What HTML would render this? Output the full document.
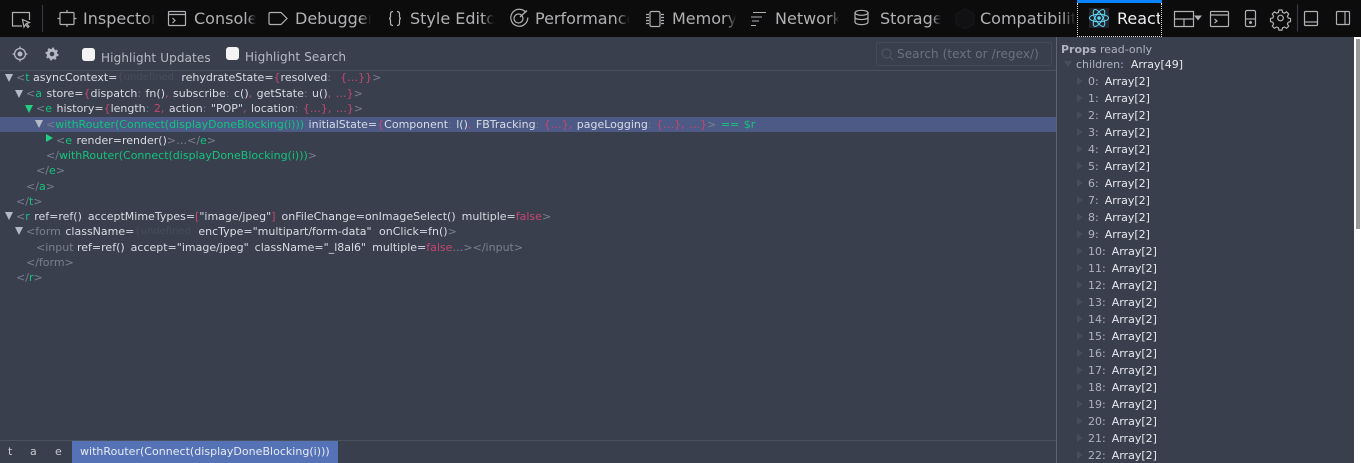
<!DOCTYPE html>
<html><head><meta charset="utf-8"><style>
html,body{margin:0;padding:0;width:1361px;height:463px;overflow:hidden;background:#fff}
body{position:relative;font-family:"DejaVu Sans","Liberation Sans",sans-serif}
.a{position:absolute;white-space:pre}
#tb{position:absolute;left:0;top:0;width:1361px;height:37px;background:#0c0c0d}
.t{position:absolute;top:9px;font-size:16px;line-height:20px;color:#b1b1b3;white-space:pre;overflow:hidden;-webkit-mask-image:linear-gradient(to right,#000 86%,transparent 100%);mask-image:linear-gradient(to right,#000 86%,transparent 100%)}
svg{position:absolute;overflow:visible}
#panel{position:absolute;left:0;top:37px;width:1354px;height:426px;background:#393f4c}
.r{position:absolute;font-size:11px;line-height:15px;height:15px;white-space:pre;color:#d8dce4;word-spacing:1px}
.g{color:#12c47c}.b{color:#79808d}.p{color:#c4476f}.c{color:#6f7684}.u{display:inline-block;color:#474d5a;width:58px;overflow:hidden;font-size:10px;vertical-align:top}
.s{display:inline-block;width:1.500px}.n{display:inline-block;margin-right:-1px}
.tri{position:absolute;width:0;height:0;border-left:4.5px solid transparent;border-right:4.5px solid transparent;border-top:8px solid #b4bac4}
.trg{border-top-color:#1fd080}
.pr{position:absolute;font-size:11px;line-height:15px;color:#aeb3bf;white-space:pre}
.pr b{font-weight:normal;color:#e6e8ee;margin-left:6px}
.pt{position:absolute;left:1077px;width:0;height:0;border-top:4px solid transparent;border-bottom:4px solid transparent;border-left:6px solid #474d5a}
.cb{position:absolute;width:12.500px;height:13px;border-radius:3px;background:#f4f4f6}
</style></head><body>
<div id="tb"></div>

<svg style="left:0;top:0" width="1361" height="37" fill="none" stroke="#b1b1b3" stroke-width="1.2">
<path d="M22 26H12.500V12.500H29.500V20"/>
<path d="M22.500 19.500l7 3-3 1 2.500 3-1 1-2.500-3-1.500 2.500z"/>
<path d="M42.500 5V32" stroke="#38383d"/>
<rect x="60" y="12.500" width="14" height="12" rx="1"/>
<path d="M57.500 18.500h2.500M74 18.500h2.500M67 10v2.500M67 24.500V27"/>
<rect x="168.500" y="11.500" width="17" height="14" rx="1"/><path d="M168.500 14.500h17M172.500 18l2.500 2.500-2.500 2.500"/>
<path d="M270.500 12.500h10.500l6 6-6 6h-10.500q-1.500 0-1.500-1.500v-9q0-1.500 1.500-1.500z"/>
<path d="M393 11.500q-2.500 0-2.500 2.500v2.500q0 2-1.500 2 1.500 0 1.500 2V23q0 2.500 2.500 2.500M397 11.500q2.500 0 2.500 2.500v2.500q0 2 1.500 2-1.500 0-1.500 2V23q0 2.500-2.500 2.500"/>
<path d="M526 12.500a8.500 8.500 0 1 0 1.800 5"/><circle cx="518.500" cy="18.500" r="4.500"/><path d="M520 17l7-6.500"/>
<rect x="650" y="11.500" width="10" height="15" rx="1.500"/><path d="M646 14.500h3M646 17.500h3M646 20.500h3M646 23.500h3M661 14.500h3M661 17.500h3M661 20.500h3M661 23.500h3"/>
<path d="M753 12.500h13M751 17h11M752 21h7M751 25.500h5" stroke-width="1"/>
<ellipse cx="861.500" cy="12.800" rx="6.500" ry="2.500"/><path d="M855 12.800v4.500c0 3 13 3 13 0v-4.500M855 17.300v4.700c0 3.500 13 3.500 13 0v-4.700"/>
<path d="M956 14l9-5 9 5v10l-9 5-9-5z" stroke="#171719" fill="#111113"/>
<path d="M1174.500 11.500h19v15h-19zM1174.500 19h19M1184 19v7.500"/>
<path d="M1194 15.500h8l-4 5z" fill="#b1b1b3" stroke="none"/>
<rect x="1210.500" y="11.500" width="18" height="15" rx="1"/><path d="M1210.500 15h18M1214.500 19l2.500 2-2.500 2"/>
<rect x="1245.500" y="10.500" width="10" height="16" rx="1.500"/><circle cx="1250.500" cy="22.500" r="1.500" fill="#b1b1b3" stroke="none"/><path d="M1245.500 19h10"/>
<path d="M1279 10.500h3l.6 2.400 1.800.8 2.200-1.300 2.100 2.100-1.300 2.200.8 1.800 2.300.6v3l-2.300.6-.8 1.800 1.300 2.200-2.100 2.100-2.200-1.300-1.800.8-.6 2.300h-3l-.6-2.300-1.800-.8-2.200 1.300-2.100-2.100 1.300-2.200-.8-1.800-2.300-.6v-3l2.300-.6.8-1.800-1.300-2.200 2.100-2.100 2.200 1.300 1.800-.8z" transform="translate(0 -.5)"/><circle cx="1280.500" cy="18" r="2.800"/>
<path d="M1297.500 4.500V31.500" stroke="#38383d"/>
<rect x="1304.500" y="11.500" width="13" height="14" rx="1"/><path d="M1304.500 22h13"/>
<rect x="1336.500" y="11.500" width="13" height="13" rx="1"/><path d="M1345 11.500v13"/>
</svg>

<div class="t" style="left:83px;width:72px">Inspector</div>
<div class="t" style="left:194px;width:62px">Console</div>
<div class="t" style="left:295px;width:76px">Debugger</div>
<div class="t" style="left:410px;width:84px">Style Editor</div>
<div class="t" style="left:535px;width:95px">Performance</div>
<div class="t" style="left:672px;width:64px">Memory</div>
<div class="t" style="left:775px;width:64px">Network</div>
<div class="t" style="left:880px;width:61px">Storage</div>
<div class="t" style="left:980px;width:96px">Compatibility</div>

<div class="a" style="left:1077px;top:0;width:85px;height:3px;background:#0a84ff"></div>
<div class="a" style="left:1077px;top:3px;width:83px;height:33px;border:1px dotted #ddd;border-top:0"></div>
<div class="a" style="left:1089px;top:8px;width:20px;height:20px;background:#20232a"></div>
<svg style="left:1089px;top:8px" width="20" height="20" fill="none" stroke="#61dafb" stroke-width="1">
<ellipse cx="10" cy="10" rx="9.500" ry="3.800"/><ellipse cx="10" cy="10" rx="9.500" ry="3.800" transform="rotate(60 10 10)"/><ellipse cx="10" cy="10" rx="9.500" ry="3.800" transform="rotate(120 10 10)"/><circle cx="10" cy="10" r="1.800" fill="#61dafb" stroke="none"/>
</svg>
<div class="t" style="left:1117px;width:43px;color:#f0f0f2;-webkit-mask-image:none;mask-image:none">React</div>

<div id="panel"></div>
<div class="a" style="left:1356px;top:39px;width:3.500px;height:190px;background:#9a9a9a"></div>

<!-- sub toolbar -->
<svg style="left:0;top:37px" width="70" height="34" fill="none">
<circle cx="20" cy="17" r="5.500" stroke="#b4b9c3" stroke-width="1.300"/><circle cx="20" cy="17" r="2.500" fill="#b4b9c3"/><path d="M20 9.500v2M20 22.500v2M12.500 17h2M25.500 17h2" stroke="#b4b9c3" stroke-width="1.300"/>
<circle cx="52" cy="17" r="3.800" stroke="#b4b9c3" stroke-width="3"/><circle cx="52" cy="17" r="5.800" stroke="#b4b9c3" stroke-width="1.500" stroke-dasharray="2 2.550"/>
</svg>
<div class="cb" style="left:82px;top:48px"></div>
<div class="a" style="left:101px;top:51px;font-size:12px;line-height:15px;letter-spacing:.12px;color:#b6bbc5">Highlight Updates</div>
<div class="cb" style="left:226px;top:47px"></div>
<div class="a" style="left:245px;top:50px;font-size:12px;line-height:15px;letter-spacing:.12px;color:#b6bbc5">Highlight Search</div>
<div class="a" style="left:876px;top:42px;width:174px;height:22px;border:1px solid #444a57;border-radius:2px"></div>
<svg style="left:880px;top:47px" width="14" height="14" fill="none"><circle cx="6.500" cy="6.500" r="4.500" stroke="#4d5360" stroke-width="1.300"/><path d="M10 10l3 3" stroke="#4d5360" stroke-width="1.300"/></svg>
<div class="a" style="left:897px;top:47px;font-size:12px;line-height:15px;letter-spacing:.08px;color:#6b7280">Search (text or /regex/)</div>
<div class="a" style="left:0;top:70px;width:1056px;height:1px;background:#4a505c"></div>

<!-- divider -->
<div class="a" style="left:1056px;top:37px;width:1px;height:426px;background:#5d636f"></div>

<!-- tree -->
<div class="a" style="left:0;top:117px;width:1056px;height:15px;background:#4c5a85"></div>

<div class="tri" style="left:5px;top:74px"></div>
<div class="r" style="left:16px;top:70px"><span class="b">&lt;</span><span class="g">t</span><i class="n"></i> asyncContext=<span class="u">{undefined}</span><i class="s"></i> rehydrateState=<span class="p">{</span>resolved<span class="c">:</span>  <span class="p">{…}}</span><span class="b">&gt;</span></div>

<div class="tri" style="left:15px;top:90px"></div>
<div class="r" style="left:26px;top:86px"><span class="b">&lt;</span><span class="g">a</span> store=<span class="p">{</span>dispatch<span class="c">:</span> fn()<span class="p">,</span> subscribe<span class="c">:</span> c()<span class="p">,</span> getState<span class="c">:</span> u()<span class="p">, …}</span><span class="b">&gt;</span></div>

<div class="tri trg" style="left:25px;top:105px"></div>
<div class="r" style="left:36px;top:101px"><span class="b">&lt;</span><span class="g">e</span> history=<span class="p">{</span>length<span class="c">:</span> <span class="p">2,</span> action<span class="c">:</span> "POP"<span class="p">,</span> location<span class="c">:</span> <span class="p">{…}, …}</span><span class="b">&gt;</span></div>

<div class="tri" style="left:35px;top:120px"></div>
<div class="r" style="left:46px;top:117px"><span class="b">&lt;</span><span class="g">withRouter(Connect(displayDoneBlocking(i)))</span> initialState=<span class="p">{</span>Component<span class="c">:</span> l()<span class="p">,</span> FBTracking<span class="c">:</span> <span class="p">{…},</span> pageLogging<span class="c">:</span> <span class="p">{…}, …}</span><span class="b">&gt;</span> <span class="g">== $r</span></div>

<div class="a" style="left:46px;top:134px;width:0;height:0;border-top:4.500px solid transparent;border-bottom:4.500px solid transparent;border-left:7px solid #1fd080"></div>
<div class="r" style="left:56px;top:133px"><span class="b">&lt;</span><span class="g">e</span> render=render()<span class="b">&gt;…&lt;/</span><span class="g">e</span><span class="b">&gt;</span></div>
<div class="r" style="left:46px;top:148px"><span class="b">&lt;/</span><span class="g">withRouter(Connect(displayDoneBlocking(i)))</span><span class="b">&gt;</span></div>
<div class="r" style="left:36px;top:163px"><span class="b">&lt;/</span><span class="g">e</span><span class="b">&gt;</span></div>
<div class="r" style="left:26px;top:179px"><span class="b">&lt;/</span><span class="g">a</span><span class="b">&gt;</span></div>
<div class="r" style="left:16px;top:194px"><span class="b">&lt;/</span><span class="g">t</span><span class="b">&gt;</span></div>

<div class="tri" style="left:5px;top:212px"></div>
<div class="r" style="left:16px;top:209px"><span class="b">&lt;</span><span class="g">r</span> ref=ref()<i class="s"></i> acceptMimeTypes=<span class="p">[</span>"image/jpeg"<span class="p">]</span><i class="s"></i> onFileChange=onImageSelect()<i class="s"></i> multiple=<span class="p">false</span><span class="b">&gt;</span></div>

<div class="tri" style="left:15px;top:227px"></div>
<div class="r" style="left:26px;top:224px"><span class="b">&lt;form</span> className=<span class="u">{undefined}</span><i class="s"></i> encType="multipart/form-data"<i class="s"></i><i class="s"></i> onClick=fn()<span class="b">&gt;</span></div>
<div class="r" style="left:36px;top:240px"><span class="b">&lt;input</span><i class="n"></i> ref=ref()<i class="s"></i> accept="image/jpeg"<i class="s"></i> className="_l8al6"<i class="s"></i> multiple=<span class="p">false</span><span class="b">…&gt;&lt;/input&gt;</span></div>
<div class="r" style="left:26px;top:255px"><span class="b">&lt;/form&gt;</span></div>
<div class="r" style="left:16px;top:270px"><span class="b">&lt;/</span><span class="g">r</span><span class="b">&gt;</span></div>

<!-- breadcrumb -->
<div class="a" style="left:0;top:440px;width:1056px;height:1px;background:#4a505c"></div>
<div class="a" style="left:72px;top:441px;width:266px;height:22px;background:#5472b5"></div>
<div class="r" style="left:8px;top:444px;color:#c5c9d2">t</div>
<div class="r" style="left:30px;top:444px;color:#c5c9d2">a</div>
<div class="r" style="left:55px;top:444px;color:#c5c9d2">e</div>
<div class="r" style="left:80px;top:444px;color:#e8ebf2;letter-spacing:.02px">withRouter(Connect(displayDoneBlocking(i)))</div>

<!-- props -->
<div class="a" style="left:1061px;top:42px;font-size:11px;line-height:15px;color:#aeb3bf"><span style="font-weight:bold">Props</span> read-only</div>
<div class="a" style="left:1064px;top:61px;width:0;height:0;border-left:4px solid transparent;border-right:4px solid transparent;border-top:6px solid #474d5a"></div>
<div class="pr" style="left:1076px;top:57px">children:<b style="margin-left:7px">Array[49]</b></div>

<div class="pt" style="top:77px"></div><div class="pr" style="left:1088px;top:74px">0:<b>Array[2]</b></div>
<div class="pt" style="top:94px"></div><div class="pr" style="left:1088px;top:91px">1:<b>Array[2]</b></div>
<div class="pt" style="top:111px"></div><div class="pr" style="left:1088px;top:108px">2:<b>Array[2]</b></div>
<div class="pt" style="top:128px"></div><div class="pr" style="left:1088px;top:125px">3:<b>Array[2]</b></div>
<div class="pt" style="top:145px"></div><div class="pr" style="left:1088px;top:142px">4:<b>Array[2]</b></div>
<div class="pt" style="top:162px"></div><div class="pr" style="left:1088px;top:159px">5:<b>Array[2]</b></div>
<div class="pt" style="top:179px"></div><div class="pr" style="left:1088px;top:176px">6:<b>Array[2]</b></div>
<div class="pt" style="top:196px"></div><div class="pr" style="left:1088px;top:193px">7:<b>Array[2]</b></div>
<div class="pt" style="top:213px"></div><div class="pr" style="left:1088px;top:210px">8:<b>Array[2]</b></div>
<div class="pt" style="top:230px"></div><div class="pr" style="left:1088px;top:227px">9:<b>Array[2]</b></div>
<div class="pt" style="top:247px"></div><div class="pr" style="left:1088px;top:244px">10:<b>Array[2]</b></div>
<div class="pt" style="top:264px"></div><div class="pr" style="left:1088px;top:261px">11:<b>Array[2]</b></div>
<div class="pt" style="top:281px"></div><div class="pr" style="left:1088px;top:278px">12:<b>Array[2]</b></div>
<div class="pt" style="top:298px"></div><div class="pr" style="left:1088px;top:295px">13:<b>Array[2]</b></div>
<div class="pt" style="top:315px"></div><div class="pr" style="left:1088px;top:312px">14:<b>Array[2]</b></div>
<div class="pt" style="top:332px"></div><div class="pr" style="left:1088px;top:329px">15:<b>Array[2]</b></div>
<div class="pt" style="top:349px"></div><div class="pr" style="left:1088px;top:346px">16:<b>Array[2]</b></div>
<div class="pt" style="top:366px"></div><div class="pr" style="left:1088px;top:363px">17:<b>Array[2]</b></div>
<div class="pt" style="top:383px"></div><div class="pr" style="left:1088px;top:380px">18:<b>Array[2]</b></div>
<div class="pt" style="top:400px"></div><div class="pr" style="left:1088px;top:397px">19:<b>Array[2]</b></div>
<div class="pt" style="top:417px"></div><div class="pr" style="left:1088px;top:414px">20:<b>Array[2]</b></div>
<div class="pt" style="top:434px"></div><div class="pr" style="left:1088px;top:431px">21:<b>Array[2]</b></div>
<div class="pt" style="top:451px"></div><div class="pr" style="left:1088px;top:448px">22:<b>Array[2]</b></div>
</body></html>
